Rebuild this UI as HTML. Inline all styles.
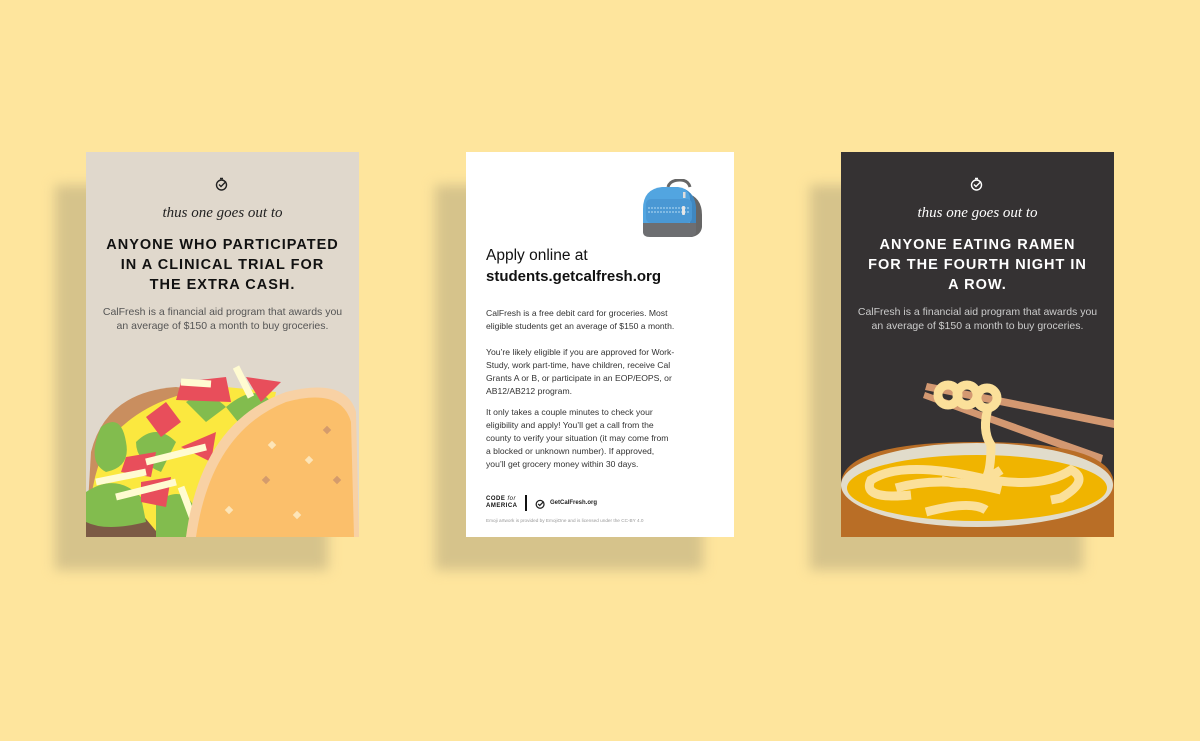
<!DOCTYPE html>
<html><head><style>
*{margin:0;padding:0;box-sizing:border-box}
body{width:1200px;height:741px;background:#fee59d;position:relative;overflow:hidden;font-family:"Liberation Sans",sans-serif}
.sh{position:absolute;width:273px;height:385px;background:#d6c38b;filter:blur(6px)}
.card{position:absolute;top:152px;height:385px;overflow:hidden}
.c{position:absolute;left:0;width:100%;text-align:center}
.script{font-family:"Liberation Serif",serif;font-style:italic;font-size:15px;color:#222}
.h{font-weight:bold;font-size:14.5px;letter-spacing:1px;line-height:20px}
.b{font-size:10.5px;line-height:14px}
.p{position:absolute;left:20px;width:240px;font-size:8.6px;line-height:12.9px;color:#333;white-space:nowrap}
</style></head><body>
<div class="sh" style="left:55px;top:185px"></div>
<div class="sh" style="left:435px;top:185px;width:268px"></div>
<div class="sh" style="left:810px;top:185px"></div>

<div class="card" style="left:86px;width:273px;background:#e0d8cc">
<svg class="c" style="top:25px;left:129px;width:14px" viewBox="0 0 14 14" width="14" height="14"><circle cx="6.5" cy="8" r="5" fill="none" stroke="#222" stroke-width="1.4"/><path d="M4 7.5l2 2 5-5M5 1.5h3" stroke="#222" stroke-width="1.4" fill="none"/></svg>
<div class="c script" style="top:53px">thus one goes out to</div>
<div class="c h" style="top:83px;color:#111">ANYONE WHO PARTICIPATED<br>IN A CLINICAL TRIAL FOR<br>THE EXTRA CASH.</div>
<div class="c b" style="top:153px;color:#555">CalFresh is a financial aid program that awards you<br>an average of $150 a month to buy groceries.</div>
<svg style="position:absolute;left:0;top:210px" width="273" height="175" viewBox="0 0 273 175">
<path d="M0 175 L5 90 Q20 30 90 25 L130 30 L140 175Z" fill="#c98e5f"/>
<path d="M5 175 Q0 110 30 70 Q70 30 140 25 L190 30 L160 175Z" fill="#fbe83f"/>
<path d="M0 150 L50 145 L75 175 L0 175Z" fill="#7c5a45"/>
<path d="M15 65 Q35 50 40 80 Q45 105 20 110 Q0 100 15 65Z M50 80 Q70 60 90 80 L75 110 Q50 100 50 80Z M0 130 Q30 110 55 135 L60 160 Q20 170 0 160Z M70 140 Q100 120 110 150 L100 175 L70 175Z M100 40 Q120 25 140 45 L120 60Z M140 45 Q170 20 185 40 L160 70Z M120 105 Q140 80 160 100 L140 130Z" fill="#82bc4e"/>
<path d="M95 20 L140 15 L145 40 L90 38Z M60 55 L80 40 L95 60 L75 75Z M40 95 L70 90 L65 115 L35 110Z M95 85 L130 70 L125 100 Z M55 120 L85 115 L80 145 L55 140Z M160 15 L195 20 L175 40Z" fill="#e84e5b"/>
<path d="M60 100 L120 85 M30 135 L90 120 M95 20 L125 22 M150 5 L165 35 M95 125 L110 165 M10 120 L60 110" stroke="#fffbd1" stroke-width="7"/>
<path d="M100 175 Q115 60 200 30 Q260 15 270 50 L273 175Z" fill="#f8d1a4"/>
<path d="M110 175 Q125 70 200 40 Q255 25 265 60 L268 175Z" fill="#fbbf6b"/>
<g fill="#fde5b8"><rect x="183" y="80" width="6" height="6" transform="rotate(45 186 83)"/><rect x="220" y="95" width="6" height="6" transform="rotate(45 223 98)"/><rect x="140" y="145" width="6" height="6" transform="rotate(45 143 148)"/><rect x="208" y="150" width="6" height="6" transform="rotate(45 211 153)"/></g>
<g fill="#d49b6c"><rect x="238" y="65" width="6" height="6" transform="rotate(45 241 68)"/><rect x="177" y="115" width="6" height="6" transform="rotate(45 180 118)"/><rect x="248" y="115" width="6" height="6" transform="rotate(45 251 118)"/></g>
</svg>
</div>

<div class="card" style="left:466px;width:268px;background:#fff">
<svg style="position:absolute;left:176px;top:27px" width="62" height="60" viewBox="0 0 62 60">
<path d="M26 8 Q28 1 38 1 Q46 1 48 8" fill="none" stroke="#666" stroke-width="3"/>
<path d="M44 14 Q60 18 60 36 L60 48 Q59 56 50 58 L46 58Z" fill="#666"/>
<path d="M1 30 Q1 10 20 8 L36 8 Q52 10 54 30 L54 48 L1 48Z" fill="#52a5e0"/>
<path d="M40 9 Q54 14 54 30 L54 48 L48 48 L48 20 Q48 12 40 9Z" fill="#3f87c0"/>
<path d="M1 44 L54 44 L54 53 Q54 58 46 58 L8 58 Q1 58 1 53Z" fill="#6d6e71"/>
<rect x="4" y="20" width="46" height="24" rx="5" fill="#4a98d4"/>
<path d="M6 29h42M6 33h42" stroke="#b5dbf5" stroke-width="1" stroke-dasharray="2 1"/>
<rect x="40" y="27" width="3" height="9" rx="1" fill="#e6e6e6"/><rect x="41" y="13" width="2.5" height="6" fill="#ddd"/>
</svg>
<div style="position:absolute;left:20px;top:95px;font-size:15.5px;color:#111">Apply online at</div>
<div style="position:absolute;left:20px;top:116px;font-size:15px;font-weight:bold;color:#111">students.getcalfresh.org</div>
<div class="p" style="top:155px">CalFresh is a free debit card for groceries. Most<br>eligible students get an average of $150 a month.</div>
<div class="p" style="top:194px">You’re likely eligible if you are approved for Work-<br>Study, work part-time, have children, receive Cal<br>Grants A or B, or participate in an EOP/EOPS, or<br>AB12/AB212 program.</div>
<div class="p" style="top:254px">It only takes a couple minutes to check your<br>eligibility and apply! You’ll get a call from the<br>county to verify your situation (it may come from<br>a blocked or unknown number). If approved,<br>you’ll get grocery money within 30 days.</div>
<div style="position:absolute;left:20px;top:344px;font-size:6px;font-weight:bold;line-height:7px;color:#111;letter-spacing:.5px">CODE <i style="font-weight:normal">for</i><br>AMERICA</div>
<div style="position:absolute;left:59px;top:343px;width:1.5px;height:16px;background:#111"></div>
<svg style="position:absolute;left:69px;top:346px" width="11" height="11" viewBox="0 0 14 14"><circle cx="6.5" cy="8" r="5" fill="none" stroke="#222" stroke-width="1.6"/><path d="M4 7.5l2 2 5-5" stroke="#222" stroke-width="1.6" fill="none"/></svg>
<div style="position:absolute;left:84px;top:348px;font-size:6px;font-weight:bold;color:#222">GetCalFresh.org</div>
<div style="position:absolute;left:20px;top:366px;font-size:4.7px;color:#999">Emoji artwork is provided by EmojiOne and is licensed under the CC-BY 4.0</div>
</div>

<div class="card" style="left:841px;width:273px;background:#353233">
<svg class="c" style="top:25px;left:129px;width:14px" viewBox="0 0 14 14" width="14" height="14"><circle cx="6.5" cy="8" r="5" fill="none" stroke="#fff" stroke-width="1.4"/><path d="M4 7.5l2 2 5-5M5 1.5h3" stroke="#fff" stroke-width="1.4" fill="none"/></svg>
<div class="c script" style="top:53px;color:#fff">thus one goes out to</div>
<div class="c h" style="top:83px;color:#fff">ANYONE EATING RAMEN<br>FOR THE FOURTH NIGHT IN<br>A ROW.</div>
<div class="c b" style="top:153px;color:#ccc">CalFresh is a financial aid program that awards you<br>an average of $150 a month to buy groceries.</div>
<svg style="position:absolute;left:0;top:188px" width="273" height="197" viewBox="0 0 273 197">
<path d="M86 43 L273 80 L273 88 L84 50Z M84 52 L262 115 L260 123 L82 58Z" fill="#d39871"/>
<path d="M0 145 Q0 102 136 102 Q273 102 273 145 L273 197 L0 197Z" fill="#b96e26"/>
<ellipse cx="136" cy="145" rx="136" ry="42" fill="#e1dccb"/>
<ellipse cx="136" cy="148" rx="130" ry="33" fill="#f0b400"/>
<g fill="none" stroke="#fbe09a" stroke-width="9" stroke-linecap="butt">
<path d="M148 65 Q140 90 150 105 Q150 130 145 138"/>
<path d="M70 155 Q20 160 30 140 Q60 120 140 138 Q200 150 230 130 Q250 140 220 158 L210 160"/>
<path d="M55 148 Q100 135 160 150 M85 172 Q130 160 145 170 M100 140 Q130 150 160 130"/>
<circle cx="107" cy="55" r="10"/><circle cx="126" cy="55" r="10"/><circle cx="146" cy="58" r="10"/>
</g>
</svg>
</div>
</body></html>
